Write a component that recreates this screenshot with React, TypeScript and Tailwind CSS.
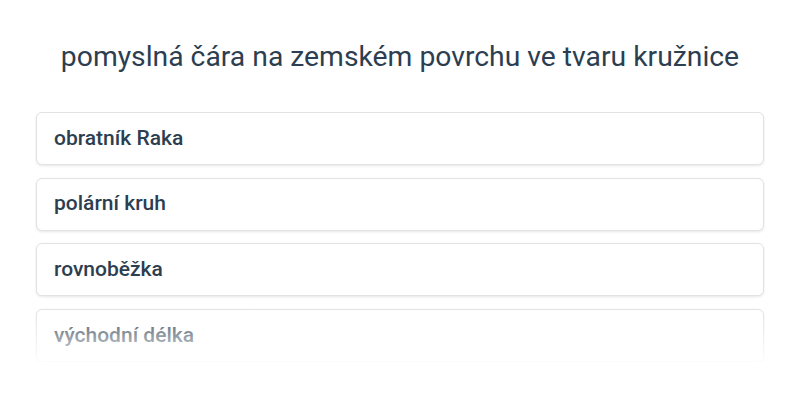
import React from "react";

const items = ["obratník Raka", "polární kruh", "rovnoběžka", "východní délka"];

export default function App() {
  return (
    <div className="w-[800px] h-[400px] bg-white flex flex-col items-center" style={{ fontFamily: "Roboto, 'Noto Sans', sans-serif" }}>
      <h1 className="mt-[40px] text-[28.3px] leading-[34px] font-normal text-[#2c3e50] text-center">
        pomyslná čára na zemském povrchu ve tvaru kružnice
      </h1>
      <div className="relative mt-[38px] w-[730px] h-[250px] overflow-hidden">
        <div className="flex flex-col gap-[12.67px] px-px">
          {items.map((t) => (
            <div
              key={t}
              className="h-[53px] shrink-0 rounded-[6px] border border-[#e2e2e2] bg-white shadow-[0_1px_3px_rgba(0,0,0,0.1)] flex items-center pl-[17px] text-[21px] font-medium text-[#2c3e50]"
            >
              {t}
            </div>
          ))}
        </div>
        <div className="pointer-events-none absolute left-0 right-0 bottom-0 h-[56px] bg-gradient-to-b from-white/0 to-white/90" />
      </div>
    </div>
  );
}
